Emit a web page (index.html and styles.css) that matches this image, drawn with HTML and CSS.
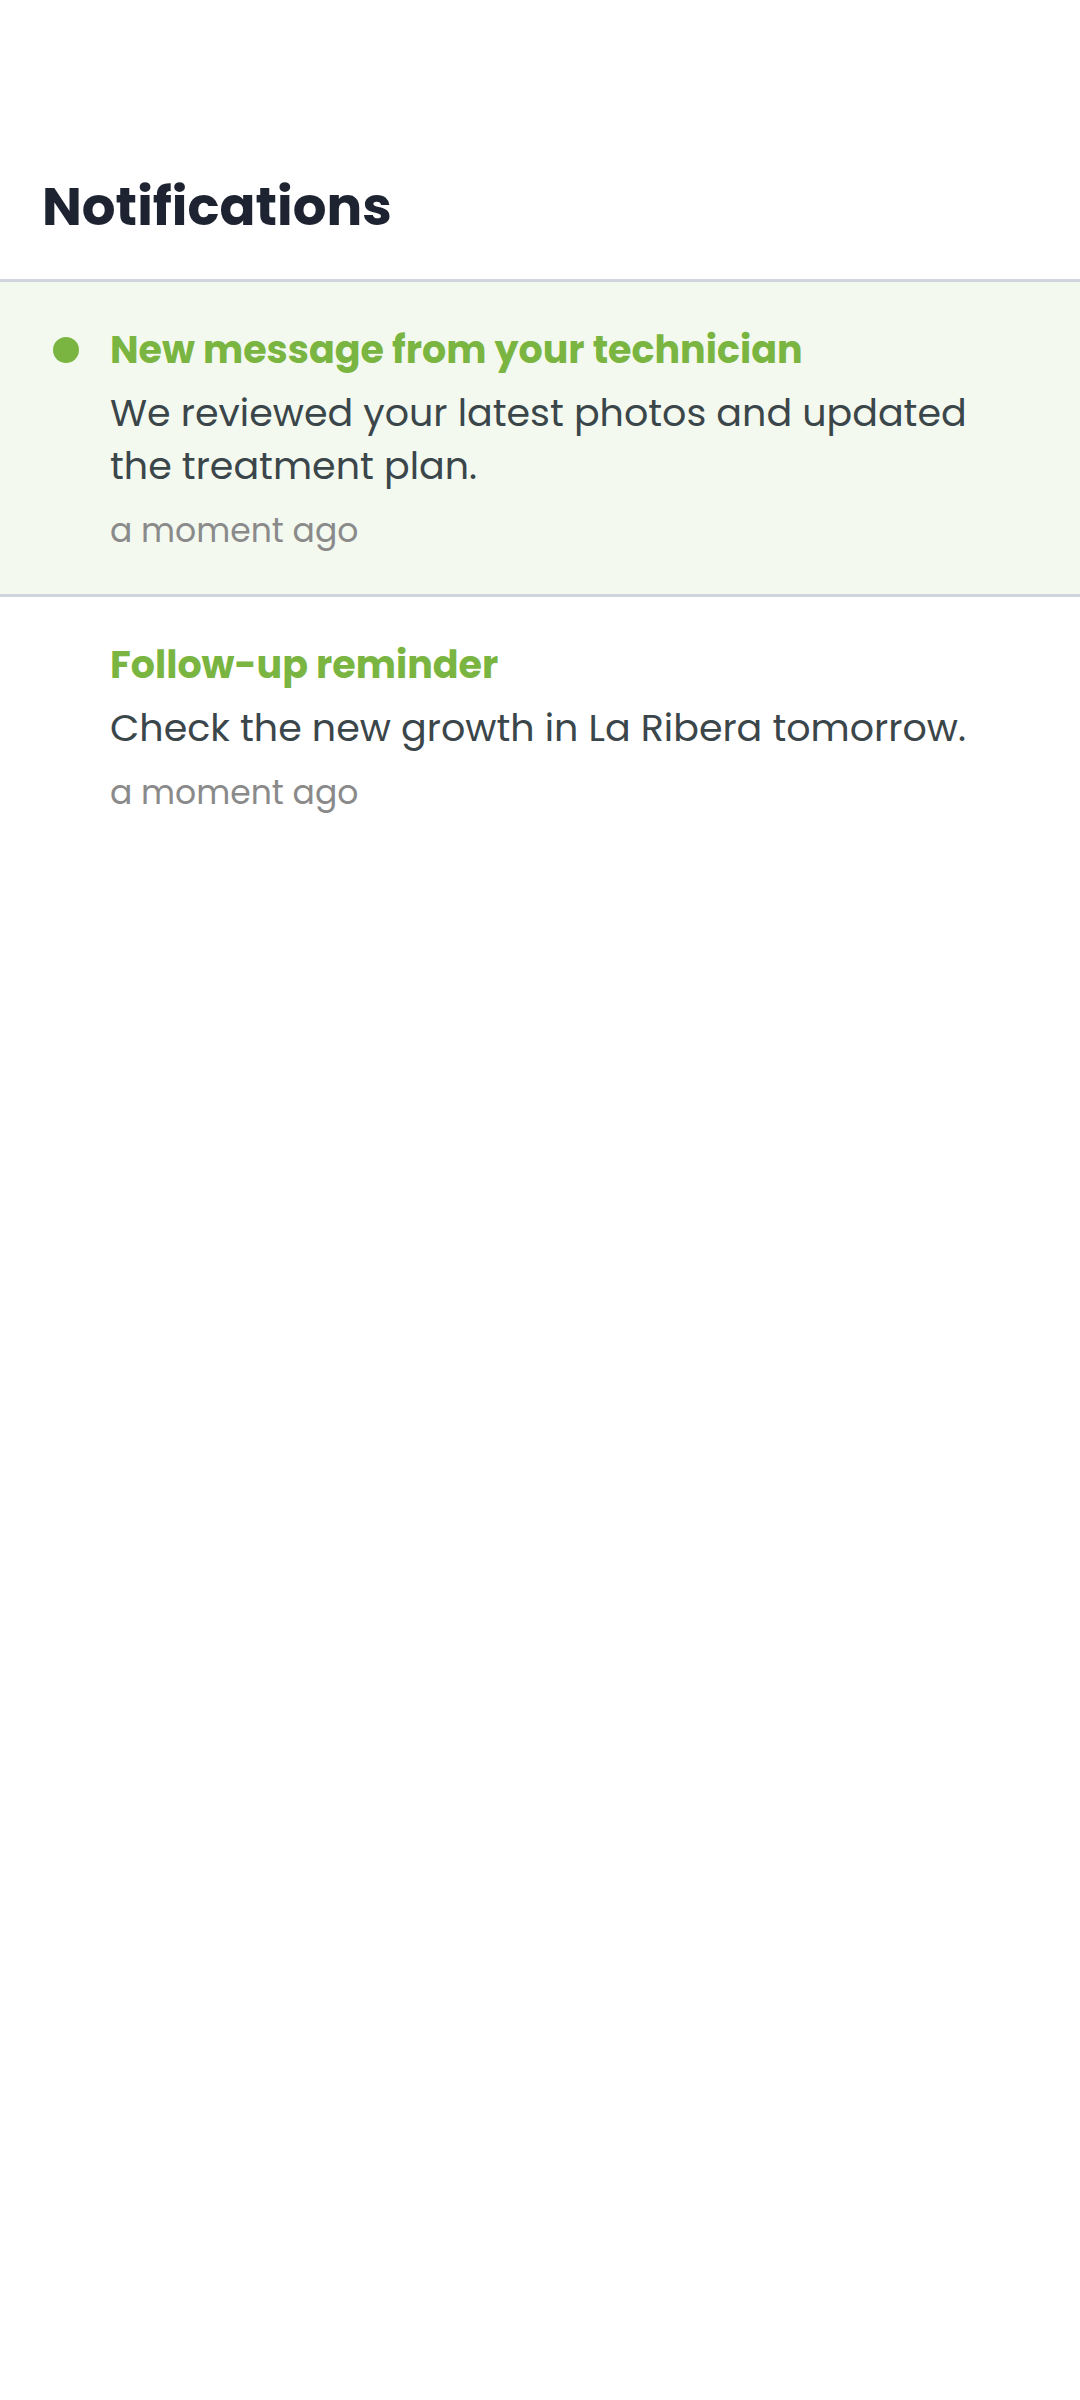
FILE: index.html
```html
<!DOCTYPE html>
<html lang="en">
<head>
    <meta charset="UTF-8">
    <meta name="viewport" content="width=device-width, initial-scale=1.0">
    <title>Notifications</title>
    <link rel="stylesheet" href="styles.css">
</head>
<body>
    <header class="page-header">
        <h1>Notifications</h1>
    </header>

    <!-- Notification list -->
    <ul class="notifications">
        <li class="notification unread">
            <span class="dot"></span>
            <div class="content">
                <h2>New message from your technician</h2>
                <p class="message">We reviewed your latest photos and updated the treatment plan.</p>
                <p class="time">a moment ago</p>
            </div>
        </li>
        <li class="notification">
            <span class="dot"></span>
            <div class="content">
                <h2>Follow-up reminder</h2>
                <p class="message">Check the new growth in La Ribera tomorrow.</p>
                <p class="time">a moment ago</p>
            </div>
        </li>
    </ul>
</body>
</html>
```

FILE: styles.css
```css
* {
    box-sizing: border-box;
}

body {
    font-family: Poppins, Inter, sans-serif;
    margin: 0;
    background-color: #fff;
}

h1, h2, p {
    margin: 0;
}

.page-header {
    padding: 168px 42px 33px;
}

h1 {
    color: #1d2330;
    font-size: 53px;
    line-height: 78px;
    font-weight: 700;
}

.notifications {
    list-style: none;
    margin: 0;
    padding: 0;
}

.notification {
    display: flex;
    align-items: flex-start;
    gap: 31px;
    padding: 41px 53px 42px;
    border-top: 3px solid #d0d5dd;
}

.unread {
    background-color: #f3f9ef;
}

.dot {
    flex: none;
    width: 26px;
    height: 26px;
    margin-top: 14px;
    border-radius: 50%;
}

.unread .dot {
    background-color: #7ab541;
}

.content {
    flex: 1;
}

h2 {
    color: #7ab541;
    font-size: 38px;
    line-height: 53px;
    font-weight: 700;
}

.message {
    margin-top: 10px;
    color: #3b464a;
    font-size: 38px;
    line-height: 53px;
}

.time {
    margin-top: 17px;
    color: #8a8a8a;
    font-size: 33px;
    line-height: 43px;
}
```
